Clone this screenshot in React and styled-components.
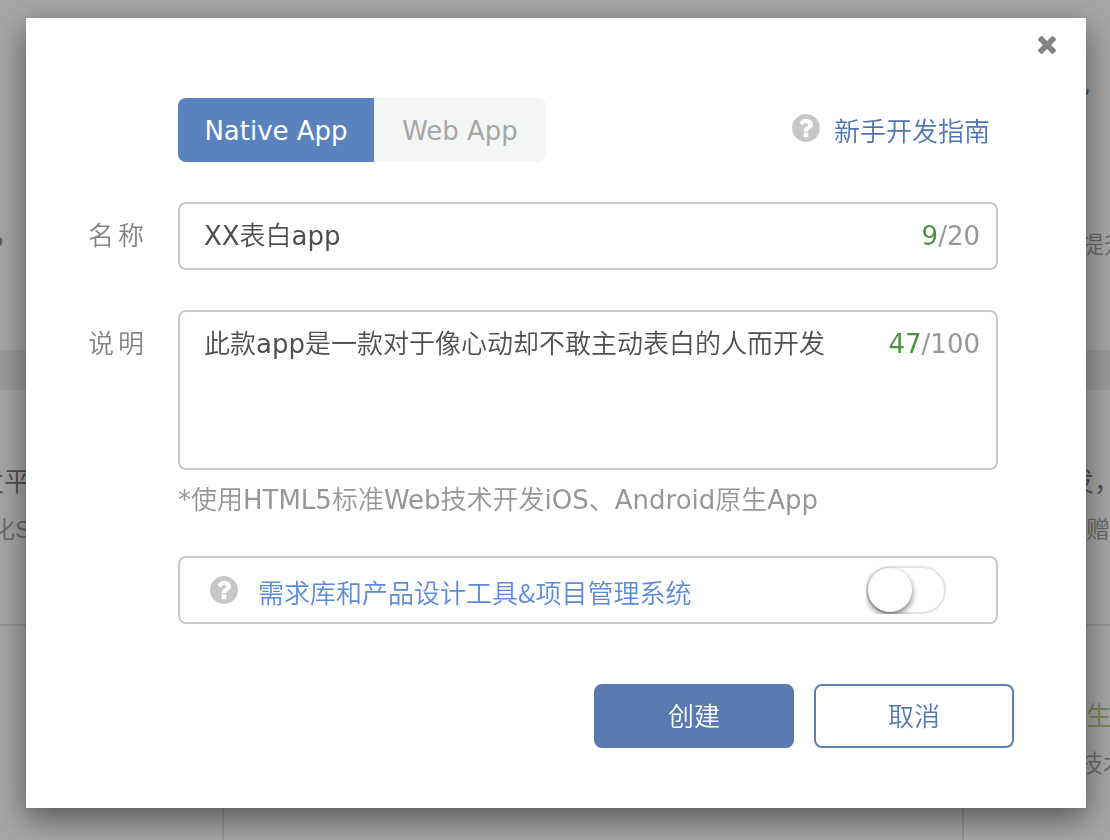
import React, { useState } from 'react'
import styled, { createGlobalStyle } from 'styled-components'

const GlobalStyle = createGlobalStyle`
  * {
    box-sizing: border-box;
  }
  body {
    margin: 0;
    background: #fff;
    font-family: 'DejaVu Sans', 'Noto Sans CJK SC DemiLight', 'Noto Sans CJK SC', sans-serif;
    font-size: 26px;
    line-height: 36px;
    color: #4f4f4f;
  }
  button, input, textarea {
    font: inherit;
    color: inherit;
  }
`

// Page under the dialog
const Page = styled.div`
  display: flex;
  flex-direction: column;
  min-height: 100vh;
  overflow: hidden;
  font-family: 'Liberation Sans', 'Noto Sans CJK SC DemiLight', 'Noto Sans CJK SC', sans-serif;
  font-size: 24px;
`

const Intro = styled.section`
  display: flex;
  flex-direction: column;
  gap: 125px;
  height: 350px;
  padding-top: 66px;
`

const Band = styled.div`
  height: 40px;
  background: #eee;
`

const Features = styled.section`
  display: flex;
  flex-direction: column;
  gap: 12px;
  height: 236px;
  padding-top: 74px;
  border-bottom: 2px solid #e4e4e4;
`

const PageRow = styled.div`
  display: flex;
  justify-content: space-between;
  font-size: ${p => (p.$large ? 26 : 24)}px;
  color: ${p => (p.$large ? '#777' : '#a4a4a4')};
`

const Edge = styled.span`
  display: flex;
  justify-content: ${p => (p.$end ? 'flex-end' : 'flex-start')};
  width: ${p => p.$width}px;
  white-space: nowrap;
`

const Columns = styled.section`
  display: grid;
  grid-template-columns: 1fr 740px 148px;
  flex: 1;
`

const Column = styled.div`
  display: flex;
  flex-direction: column;
  align-items: flex-end;
  gap: 12px;
  padding-top: 72px;
  border-left: ${p => (p.$line ? '2px solid #e4e4e4' : '0')};
  color: #a4a4a4;
`

const Green = styled.span`
  font-size: 26px;
  color: #b9cc8a;
`

const Strong = styled.strong`
  color: #8c8c8c;
`

// Dialog
const Overlay = styled.div`
  position: fixed;
  inset: 0;
  overflow: auto;
  padding: 18px 24px 32px 26px;
  background: rgba(0, 0, 0, 0.35);
`

const Dialog = styled.form`
  background: #fff;
  box-shadow: 0 10px 30px rgba(0, 0, 0, 0.5);
`

const Header = styled.header`
  display: flex;
  justify-content: flex-end;
  align-items: flex-start;
  height: 80px;
  padding: 18px 30px 0;
`

const Close = styled.button`
  display: flex;
  padding: 0;
  border: 0;
  background: none;
  color: #858585;
  cursor: pointer;
`

const Body = styled.div`
  display: grid;
  grid-template-columns: 56px 1fr;
  column-gap: 34px;
  padding: 0 88px 0 62px;
`

const TopBar = styled.div`
  grid-column: 2;
  display: flex;
  justify-content: space-between;
  align-items: flex-start;
  padding-right: 8px;
  margin-bottom: 40px;
`

const Tabs = styled.div`
  display: grid;
  grid-template-columns: 196px 172px;
  overflow: hidden;
  border-radius: 8px;
`

const Tab = styled.button`
  height: 64px;
  padding: 2px 0 0;
  border: 0;
  background: ${p => (p.$active ? '#5a82bd' : '#f4f6f6')};
  color: ${p => (p.$active ? '#fff' : '#a6a6a6')};
  cursor: pointer;
`

const HelpLink = styled.a`
  display: flex;
  align-items: center;
  gap: ${p => p.$gap}px;
  height: 60px;
  font-family: 'Noto Sans CJK SC DemiLight', 'Noto Sans CJK SC', sans-serif;
  color: ${p => p.$color};
  text-decoration: none;
`

const HelpText = styled.span`
  padding-top: 4px;
`

const Label = styled.label`
  padding-top: 16px;
  color: #858585;
  text-align: justify;
  text-align-last: justify;
`

const Field = styled.div`
  display: flex;
  align-items: flex-start;
  height: ${p => (p.$tall ? 160 : 68)}px;
  padding: 14px 16px 14px 24px;
  margin-bottom: ${p => (p.$tall ? 12 : 40)}px;
  border: 2px solid #c9c9c9;
  border-radius: 8px;
`

const TextInput = styled.input`
  flex: 1;
  min-width: 0;
  height: 36px;
  padding: 0;
  border: 0;
  outline: 0;
  background: none;
`

const TextArea = styled.textarea`
  flex: 1;
  min-width: 0;
  height: 100%;
  padding: 0;
  border: 0;
  outline: 0;
  resize: none;
  background: none;
`

const Counter = styled.span`
  color: #979797;
`

const Count = styled.span`
  color: #4a9440;
`

const Hint = styled.p`
  grid-column: 2;
  margin: 0 0 38px;
  color: #979797;
`

const Option = styled.div`
  grid-column: 2;
  display: flex;
  justify-content: space-between;
  align-items: center;
  height: 68px;
  padding: 0 50px 0 30px;
  border: 2px solid #c9c9c9;
  border-radius: 8px;
`

const Switch = styled.input`
  appearance: none;
  width: 80px;
  height: 48px;
  margin: 0;
  border: 2px solid #e3e3e3;
  border-radius: 24px;
  clip-path: inset(0);
  cursor: pointer;

  &::before {
    content: '';
    display: block;
    width: 44px;
    height: 44px;
    margin-left: ${p => (p.checked ? 32 : 0)}px;
    border-radius: 50%;
    background: #fff;
    box-shadow: 0 3px 6px rgba(0, 0, 0, 0.55);
  }
`

const Actions = styled.footer`
  display: flex;
  justify-content: flex-end;
  gap: 20px;
  padding: 60px 72px;
`

const Action = styled.button`
  width: 200px;
  height: 64px;
  padding: 2px 0 0;
  border: 2px solid ${p => (p.$primary ? '#587ab0' : '#5a82b8')};
  border-radius: 8px;
  background: ${p => (p.$primary ? '#587ab0' : '#fff')};
  color: ${p => (p.$primary ? '#fff' : '#587ab0')};
  cursor: pointer;
`

const HelpIcon = () => (
  <svg width="28" height="28" viewBox="0 128 1536 1536" fill="#c6c7c8" aria-hidden="true">
    <path d="M896 1376v-192q0-14-9-23t-23-9H672q-14 0-23 9t-9 23v192q0 14 9 23t23 9h192q14 0 23-9t9-23zm256-672q0-88-55.5-163T958 425t-170-41q-243 0-371 213-15 24 8 42l132 100q7 6 19 6 16 0 25-12 53-68 86-92 34-24 86-24 48 0 85.5 26t37.5 59q0 38-20 61t-68 45q-63 28-115.5 86.5T640 1020v36q0 14 9 23t23 9h192q14 0 23-9t9-23q0-19 21.5-49.5T972 957q32-18 49-28.5t46-35 44.5-48 28-60.5 12.5-81zm384 192q0 209-103 385.5T1153.5 1561 768 1664t-385.5-103T103 1281.5 0 896t103-385.5T382.5 231 768 128t385.5 103T1433 510.5 1536 896z" />
  </svg>
)

const CloseIcon = () => (
  <svg width="18" height="18" viewBox="110 366 1188 1188" fill="currentColor" aria-hidden="true">
    <path d="M1298 1322q0 40-28 68l-136 136q-28 28-68 28t-68-28L704 1232l-294 294q-28 28-68 28t-68-28l-136-136q-28-28-28-68t28-68l294-294-294-294q-28-28-28-68t28-68l136-136q28-28 68-28t68 28l294 294 294-294q28-28 68-28t68 28l136 136q28 28 28 68t-28 68L976 960l294 294q28 28 28 68z" />
  </svg>
)

const Backdrop = () => (
  <Page aria-hidden="true">
    <Intro>
      <PageRow $large>
        <Edge />
        <Edge $width={46}>见</Edge>
      </PageRow>
      <PageRow>
        <Edge $end $width={3}><Strong>P</Strong></Edge>
        <Edge $width={30}>提升</Edge>
      </PageRow>
    </Intro>
    <Band />
    <Features>
      <PageRow $large>
        <Edge $end $width={30}>发平</Edge>
        <Edge $width={42}>发，</Edge>
      </PageRow>
      <PageRow>
        <Edge $end $width={31}>化S</Edge>
        <Edge $width={24}>赠</Edge>
      </PageRow>
    </Features>
    <Columns>
      <Column />
      <Column $line />
      <Column $line>
        <Edge $width={24}><Green>生</Green></Edge>
        <Edge $width={31}>技术</Edge>
      </Column>
    </Columns>
  </Page>
)

const App = () => {
  const [type, setType] = useState('native')
  const [name, setName] = useState('XX表白app')
  const [desc, setDesc] = useState('此款app是一款对于像心动却不敢主动表白的人而开发')
  const [tools, setTools] = useState(false)

  return (
    <>
      <GlobalStyle />
      <Backdrop />
      <Overlay>
        <Dialog role="dialog" onSubmit={e => e.preventDefault()}>
          <Header>
            <Close type="button" aria-label="关闭"><CloseIcon /></Close>
          </Header>
          <Body>
            <TopBar>
              <Tabs>
                <Tab type="button" $active={type === 'native'} onClick={() => setType('native')}>Native App</Tab>
                <Tab type="button" $active={type === 'web'} onClick={() => setType('web')}>Web App</Tab>
              </Tabs>
              <HelpLink href="#guide" $color="#4f76b3" $gap={14}>
                <HelpIcon />
                <HelpText>新手开发指南</HelpText>
              </HelpLink>
            </TopBar>
            <Label htmlFor="name">名称</Label>
            <Field>
              <TextInput id="name" value={name} onChange={e => setName(e.target.value)} />
              <Counter><Count>9</Count>/20</Counter>
            </Field>
            <Label htmlFor="desc">说明</Label>
            <Field $tall>
              <TextArea id="desc" value={desc} onChange={e => setDesc(e.target.value)} />
              <Counter><Count>47</Count>/100</Counter>
            </Field>
            <Hint>*使用HTML5标准Web技术开发iOS、Android原生App</Hint>
            <Option>
              <HelpLink href="#tools" $color="#5b8bdc" $gap={20}>
                <HelpIcon />
                <HelpText>需求库和产品设计工具&amp;项目管理系统</HelpText>
              </HelpLink>
              <Switch
                type="checkbox"
                role="switch"
                aria-label="需求库和产品设计工具&项目管理系统"
                checked={tools}
                onChange={e => setTools(e.target.checked)}
              />
            </Option>
          </Body>
          <Actions>
            <Action type="submit" $primary>创建</Action>
            <Action type="button">取消</Action>
          </Actions>
        </Dialog>
      </Overlay>
    </>
  )
}

export default App
